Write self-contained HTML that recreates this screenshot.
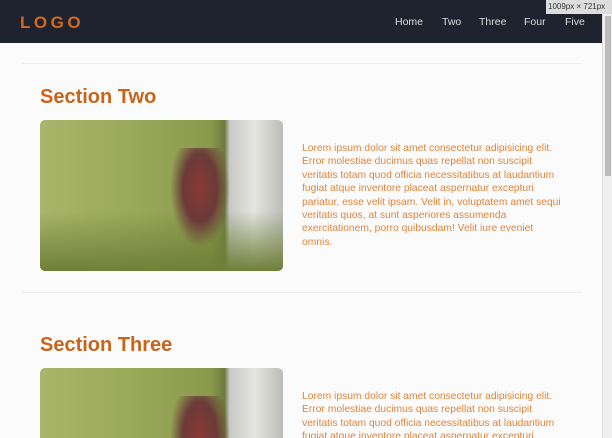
<!DOCTYPE html>
<html style="width:612px;height:438px;overflow:hidden"><head><style>
*{margin:0;padding:0;box-sizing:border-box}
body{width:612px;height:438px;overflow:hidden;background:#fbfbfb;font-family:"Liberation Sans",sans-serif;position:relative}
.nav{position:absolute;left:0;top:0;width:602px;height:43px;background:#1f2330}
.logo{position:absolute;left:20px;top:13px;color:#d2691e;font-size:17px;font-weight:bold;letter-spacing:3.5px}
.links{position:absolute;top:16px;font-size:10.5px;color:#ddd}
.badge{position:absolute;right:0;top:0;background:#ddd;color:#333;font-size:8px;padding:2px 2px;width:66px;height:14px;white-space:nowrap;overflow:hidden}
.sb{position:absolute;right:0;top:14px;width:10px;height:424px;background:#f0f0f0;border-left:1px solid #ddd}
.sb div{position:absolute;left:2px;top:2px;width:6px;height:160px;background:#bbb}
.hr{position:absolute;left:22px;width:560px;height:1px;background:#eee}
h2{position:absolute;left:40px;color:#c8651b;font-size:20px;font-weight:bold}
.img{position:absolute;left:40px;width:243px;height:151px;border-radius:5px;overflow:hidden;
background:linear-gradient(90deg,#a9b56a 0%,#9aa85a 40%,#8a9a4c 70%,#6d7a3e 76%,#c8c8c4 78%,#e4e4e0 88%,#bdbdb8 100%)}
.img .p{position:absolute;left:130px;top:28px;width:60px;height:100px;background:radial-gradient(ellipse at 50% 40%,#8a3a35 0%,#6a3b38 40%,transparent 70%)}
.img .g{position:absolute;left:0;bottom:0;width:100%;height:40%;background:linear-gradient(0deg,#6f8038,transparent)}
p{position:absolute;left:302px;width:262px;font-size:10.3px;line-height:13.4px;color:#e0843c;overflow:hidden}
</style></head><body>
<div class="nav"><div class="logo">LOGO</div>
<span class="links" style="left:395px">Home</span>
<span class="links" style="left:442px">Two</span>
<span class="links" style="left:479px">Three</span>
<span class="links" style="left:524px">Four</span>
<span class="links" style="left:565px">Five</span></div>
<div class="badge">1009px × 721px</div>
<div class="sb"><div></div></div>
<div class="hr" style="top:63px"></div>
<h2 style="top:86px">Section Two</h2>
<div class="img" style="top:120px"><div class="g"></div><div class="p"></div></div>
<p style="top:142px">Lorem ipsum dolor sit amet consectetur adipisicing elit.<br>Error molestiae ducimus quas repellat non suscipit<br>veritatis totam quod officia necessitatibus at laudantium<br>fugiat atque inventore placeat aspernatur excepturi<br>pariatur, esse velit ipsam. Velit in, voluptatem amet sequi<br>veritatis quos, at sunt asperiores assumenda<br>exercitationem, porro quibusdam! Velit iure eveniet<br>omnis.</p>
<div class="hr" style="top:292px"></div>
<h2 style="top:334px">Section Three</h2>
<div class="img" style="top:368px;height:70px;border-radius:5px 5px 0 0"><div class="p"></div></div>
<p style="top:390px;height:48px">Lorem ipsum dolor sit amet consectetur adipisicing elit.<br>Error molestiae ducimus quas repellat non suscipit<br>veritatis totam quod officia necessitatibus at laudantium<br>fugiat atque inventore placeat aspernatur excepturi</p>
</body></html>
